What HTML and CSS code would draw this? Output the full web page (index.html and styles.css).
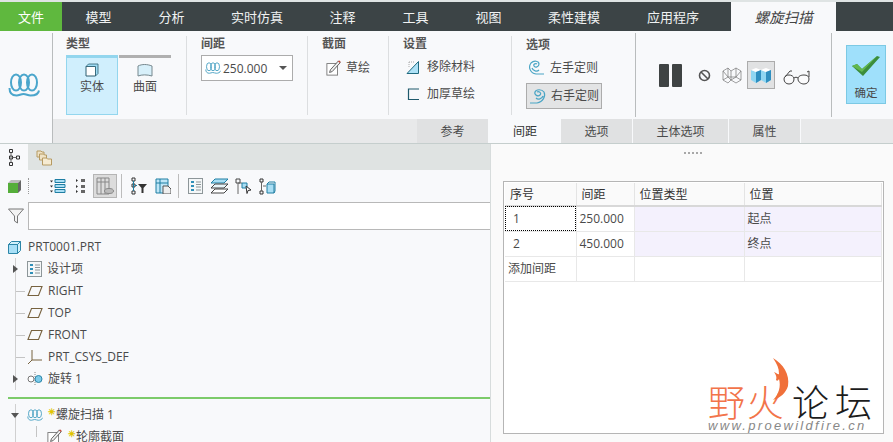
FILE: index.html
```html
<!DOCTYPE html>
<html lang="zh">
<head>
<meta charset="utf-8">
<title>螺旋扫描</title>
<link rel="stylesheet" href="styles.css">
</head>
<body>
<svg class="defs" width="0" height="0">
  <symbol id="helix" viewBox="0 0 32 24">
    <g fill="none" stroke="currentColor" stroke-width="2">
      <ellipse cx="8" cy="9.500" rx="5" ry="8"/>
      <ellipse cx="16" cy="9.500" rx="5" ry="8"/>
      <ellipse cx="24" cy="9.500" rx="5" ry="8"/>
      <path d="M1.500 15c0 5 3 7.500 7 7.500 3 0 4-1.500 7-1.500s4 1.500 7 1.500c4 0 8-1.500 8.500-5"/>
    </g>
  </symbol>
  <symbol id="plane" viewBox="0 0 16 12">
    <path d="M4.500 1.500H15L11.500 10.500H1z" fill="none" stroke="#77623f" stroke-width="1.100"/>
  </symbol>
  <symbol id="listdoc" viewBox="0 0 15 16">
    <rect x=".5" y=".5" width="14" height="15" fill="#f4f7f8" stroke="#8d9699"/>
    <path d="M3 3h3v2H3zM3 7h3v2H3zM3 11h3v2H3z" fill="#2f8fb8"/>
    <path d="M8 4h5M8 6.500h5M8 9h5M8 12h5" stroke="#8d9699"/>
  </symbol>
  <symbol id="pencil" viewBox="0 0 18 18">
    <rect x="1" y="4" width="12" height="13" fill="#fff" stroke="#777"/>
    <path d="M4 14l1-3 9-10 2 2-9 10z" fill="#eee" stroke="#555"/>
    <path d="M13.500 1.500l2 2 1-1.500-1.500-1.500z" fill="#c8483a"/>
  </symbol>
</svg>
<div class="app">
  <nav class="tabs">
    <span class="tab file">文件</span>
    <span class="tab">模型</span>
    <span class="tab">分析</span>
    <span class="tab">实时仿真</span>
    <span class="tab">注释</span>
    <span class="tab">工具</span>
    <span class="tab">视图</span>
    <span class="tab">柔性建模</span>
    <span class="tab app-tab">应用程序</span>
    <span class="tab active">螺旋扫描</span>
  </nav>

  <section class="ribbon">
    <div class="feature-icon">
      <svg class="helix-big"><use href="#helix"/></svg>
    </div>
    <div class="ribbon-main">
      <div class="groups">
        <div class="group g-type">
          <h4>类型</h4>
          <div class="type-btns">
            <div class="type-btn on">
              <svg width="14" height="14" viewBox="0 0 14 14"><path d="M1 3.500h9.500v9.500H1z" fill="#fff" stroke="#2f5f70"/><path d="M1 3.500l2.500-2.500H13v9.500L10.500 13V3.500z" fill="#9fdcf5" stroke="#2f5f70" stroke-width=".8"/></svg>
              <span>实体</span>
            </div>
            <div class="type-btn">
              <svg width="16" height="14" viewBox="0 0 16 14"><path d="M1 3c4-2 9-2 14 0v10c-5-1.500-10-1.500-14 0z" fill="#d8f0fa" stroke="#77888e"/></svg>
              <span>曲面</span>
            </div>
          </div>
        </div>
        <div class="group g-pitch">
          <h4>间距</h4>
          <div class="combo">
            <svg class="helix-small"><use href="#helix"/></svg>
            <span class="combo-val">250.000</span>
            <i class="caret"></i>
          </div>
        </div>
        <div class="group g-sect">
          <h4>截面</h4>
          <div class="cmd cmd-sketch"><svg width="16" height="16"><use href="#pencil"/></svg><span>草绘</span></div>
        </div>
        <div class="group g-set">
          <h4>设置</h4>
          <div class="cmd">
            <svg width="16" height="16" viewBox="0 0 16 16"><path d="M1 14.500L12.500 2.500V14.500z" fill="#aee2f7" stroke="#1f6a80"/><path d="M3 3h5M3 3v6" stroke="#aaa" stroke-dasharray="1 1"/></svg>
            <span>移除材料</span>
          </div>
          <div class="cmd">
            <svg width="16" height="16" viewBox="0 0 16 16"><path d="M13 3H2.500v10.500H13" fill="none" stroke="#1f5a6c" stroke-width="1.200"/></svg>
            <span>加厚草绘</span>
          </div>
        </div>
        <div class="group g-opt">
          <h4>选项</h4>
          <div class="cmd hand">
            <svg width="18" height="18" viewBox="0 0 18 18"><path d="M16 15H8C2 14 0 8 3 4c3-3 8-2 8 1s-4 4-5 2 2-3 3-2M4 9c1 3 5 4 7 2" fill="none" stroke="#4aa5c5" stroke-width="1.200"/></svg>
            <span>左手定则</span>
          </div>
          <div class="cmd hand pressed">
            <svg width="18" height="18" viewBox="0 0 18 18"><path d="M1 16h7c6-1 9-7 7-11-2-3-8-3-9 0s3 5 5 3-1-4-3-3M14 9c-1 3-5 4-7 2" fill="none" stroke="#4aa5c5" stroke-width="1.200"/></svg>
            <span>右手定则</span>
          </div>
        </div>
        <div class="group g-ctrl">
          <div class="pause"><i></i><i></i></div>
          <svg class="noentry" width="13" height="13" viewBox="0 0 13 13"><circle cx="6.500" cy="6.500" r="5" fill="none" stroke="#555" stroke-width="1.600"/><path d="M3 3l7 7" stroke="#555" stroke-width="1.600"/></svg>
          <svg class="wire" width="20" height="18" viewBox="0 0 20 18"><path d="M1 5l5-3 3 3 5-3 5 3v9l-5 3-5-3-3 3-5-3zM6 2v9l-5-6M6 11l3 3V5M14 2v9l5-6M14 11l-5 3M1 14l5-3 8 0 5 3" fill="none" stroke="#777" stroke-width=".7"/></svg>
          <div class="shade">
            <svg width="20" height="16" viewBox="0 0 20 16"><path d="M0 3l5 2 5-2v10l-5 3-5-3z" fill="#8fd6f2"/><path d="M0 3l5-2 5 2-5 2z" fill="#fff"/><path d="M5 5v11l5-3V3z" fill="#2f8fc0"/><path d="M10 3l5 2 5-2v10l-5 3-5-3z" fill="#8fd6f2"/><path d="M10 3l5-2 5 2-5 2z" fill="#fff"/><path d="M15 5v11l5-3V3z" fill="#2f8fc0"/></svg>
          </div>
          <svg class="glasses" width="28" height="16" viewBox="0 0 28 16"><path d="M1 10c0-3 3-4 5-4s5 1 5 4-2 5-5 5-5-2-5-5zM15 10c0-3 3-4 6-4s5 1 5 4-2 5-5 5-6-2-6-5zM11 9c1-1 3-1 4 0M2 8L7 2h2M26 8V2l-2 1" fill="#fff" fill-opacity=".4" stroke="#444" stroke-width="1"/></svg>
        </div>
        <div class="group g-ok">
          <div class="ok">
            <svg width="30" height="22" viewBox="0 0 30 22"><path d="M1 11l5-2 5 5L26 1l3 1-17 19z" fill="#3b8d3b"/><path d="M1 11l5-2 5 5L26 1l-15 16z" fill="#62b84e"/></svg>
            <span>确定</span>
          </div>
        </div>
      </div>
      <div class="subtabs">
        <span class="subtab">参考</span>
        <span class="subtab active">间距</span>
        <span class="subtab">选项</span>
        <span class="subtab wide">主体选项</span>
        <span class="subtab">属性</span>
      </div>
    </div>
  </section>

  <main class="panes">
    <section class="left">
      <div class="left-tabs">
        <span class="ltab active">
          <svg width="13" height="19" viewBox="0 0 13 19"><path d="M1.500 1.500h3v3h-3zM1.500 8h3v3h-3zM1.500 14.500h3v3h-3zM8.500 8h3v3h-3z" fill="none" stroke="#333"/><path d="M3 4.500V14.500M4.500 9.500h4" stroke="#666"/></svg>
        </span>
        <span class="ltab">
          <svg width="17" height="17" viewBox="0 0 17 17"><path d="M1 2h4l1 1h2v5H1z" fill="#efe2c5" stroke="#b69a62"/><path d="M3.500 5h4l1 1h2v5h-7z" fill="#efe2c5" stroke="#b69a62"/><path d="M6.500 9h4l1 1h4v6h-9z" fill="#f6ebd2" stroke="#b69a62"/></svg>
        </span>
      </div>
      <div class="toolbar">
        <svg width="14" height="14" viewBox="0 0 14 14"><path d="M0 4h10v10H0z" fill="#55ae3a"/><path d="M0 4l3-3h10l-3 3z" fill="#bbb"/><path d="M10 4l3-3v10l-3 3z" fill="#666"/></svg>
        <span class="dots"></span>
        <svg width="16" height="16" viewBox="0 0 16 16"><path d="M5 1.500h10v3H5zM5 6.500h10v3H5zM5 11.500h10v3H5z" fill="#a9def4" stroke="#1f7ea3"/><path d="M0 2.500h3L1.500 4.500zM0 7.500h3L1.500 9.500zM0 12.500h3L1.500 14.500z" fill="#333"/></svg>
        <svg width="10" height="16" viewBox="0 0 10 16"><path d="M0 1l2 1.500L0 4zM0 7l2 1.500L0 10zM0 12l2 1.500L0 15z" fill="#333"/><path d="M5 1h4v3H5zM5 7h4v3H5zM5 12h4v3H5z" fill="#666"/></svg>
        <span class="t-pressed">
          <svg width="18" height="18" viewBox="0 0 18 18"><path d="M1 1h12v16H1zM1 5h12M5 1v16M9 1v16" fill="none" stroke="#888"/><ellipse cx="13" cy="14" rx="4.500" ry="2.500" fill="#bbb" stroke="#888"/></svg>
        </span>
        <i class="sep"></i>
        <svg width="16" height="18" viewBox="0 0 16 18"><path d="M1 1h3v3H1zM1 7h3v3H1zM1 14h3v3H1z" fill="none" stroke="#333"/><path d="M2.500 4v10M4 8.500h2" stroke="#1f7ea3"/><path d="M7 7h9l-3.500 4v5h-2v-5z" fill="#333"/></svg>
        <svg width="16" height="16" viewBox="0 0 16 16"><path d="M1 1h12v14H1zM1 5h12M5 1v14" fill="#bfe6f7" stroke="#1f7ea3"/><path d="M8 8h5l3 3v5H8z" fill="#eee" stroke="#555"/></svg>
        <i class="sep"></i>
        <svg width="15" height="16"><use href="#listdoc"/></svg>
        <svg width="18" height="16" viewBox="0 0 18 16"><path d="M4 1h13l-4 4H0z" fill="#a9def4" stroke="#1f7ea3"/><path d="M4 6h13l-4 4H0z" fill="#e8f5fa" stroke="#444"/><path d="M4 11h13l-4 4H0z" fill="#fff" stroke="#444"/></svg>
        <svg width="17" height="17" viewBox="0 0 17 17"><path d="M1 1h4v4H1z" fill="none" stroke="#444"/><path d="M3 5v11M3 5h4" stroke="#666"/><path d="M7 5h5v5H7z" fill="#a9def4" stroke="#1f7ea3"/><path d="M11 8l5 4-3 .5-1 3z" fill="#fff" stroke="#333"/></svg>
        <svg width="17" height="17" viewBox="0 0 17 17"><path d="M1 1h3v3H1zM1 13h3v3H1z" fill="none" stroke="#333"/><path d="M2.500 4v9M4 8h3" stroke="#666"/><path d="M8 6h7v9H8z" fill="#a9def4" stroke="#1f7ea3"/><path d="M8 6l2-2h6v9l-1 2" fill="none" stroke="#1f7ea3"/></svg>
      </div>
      <div class="filter">
        <svg width="16" height="16" viewBox="0 0 16 16"><path d="M.5 1h15L9.500 8v7l-3-2V8z" fill="#f3f3f3" stroke="#777"/></svg>
        <span class="filter-input"></span>
      </div>
      <ul class="tree">
        <li class="root">
          <svg width="13" height="13" viewBox="0 0 13 13"><path d="M.5 3.500h9v9h-9z" fill="#a9e0f7" stroke="#2c86a8"/><path d="M.5 3.500l3-3h9l-3 3zM9.500 3.500l3-3v9l-3 3z" fill="#d3f1fb" stroke="#2c86a8"/></svg>
          <span>PRT0001.PRT</span>
        </li>
        <li class="node"><i class="exp"></i><svg class="ico" width="15" height="16"><use href="#listdoc"/></svg><span>设计项</span></li>
        <li class="node branch"><svg class="ico" width="16" height="12"><use href="#plane"/></svg><span>RIGHT</span></li>
        <li class="node branch"><svg class="ico" width="16" height="12"><use href="#plane"/></svg><span>TOP</span></li>
        <li class="node branch"><svg class="ico" width="16" height="12"><use href="#plane"/></svg><span>FRONT</span></li>
        <li class="node branch"><svg class="ico" width="16" height="16" viewBox="0 0 16 16"><path d="M5 1v10h10M5 11l-4 4" fill="none" stroke="#77623f"/></svg><span>PRT_CSYS_DEF</span></li>
        <li class="node"><i class="exp"></i><svg class="ico" width="16" height="14" viewBox="0 0 16 14"><path d="M8 0v14" stroke="#888" stroke-dasharray="1 1"/><circle cx="4" cy="7" r="3" fill="#fff" stroke="#777"/><circle cx="11.500" cy="7" r="3.500" fill="#7ccbea" stroke="#2c86a8"/></svg><span>旋转 1</span></li>
        <li class="insert"></li>
        <li class="node"><i class="exp open"></i><svg class="ico ico-helix" width="16" height="12"><use href="#helix"/></svg><b class="star">✳</b><span>螺旋扫描 1</span></li>
        <li class="node sub"><svg class="ico" width="16" height="16"><use href="#pencil"/></svg><b class="star">✳</b><span>轮廓截面</span></li>
      </ul>
    </section>

    <section class="right">
      <div class="grip"><i></i></div>
      <div class="table-box">
        <table>
          <thead>
            <tr><th class="c1">序号</th><th class="c2">间距</th><th class="c3">位置类型</th><th class="c4">位置</th></tr>
          </thead>
          <tbody>
            <tr><td class="num focus">1</td><td class="val">250.000</td><td class="tint"></td><td class="tint">起点</td></tr>
            <tr><td class="num">2</td><td class="val">450.000</td><td class="tint"></td><td class="tint">终点</td></tr>
            <tr><td class="add">添加间距</td><td></td><td></td><td></td></tr>
          </tbody>
        </table>
      </div>
      <div class="watermark">
        <div class="wm-main">
          <span class="wm-red">野</span>
          <span class="wm-red wm-fire">火
            <svg class="flame" width="18" height="42" viewBox="0 0 18 42"><path d="M1 0c10 6 17 16 15 28C14 35 8 40 1 42c6-6 8-14 6-21-1 2-2 2-3 1 1-3 0-5-2-8 3 1 4 3 5 2C7 10 5 6 1 0z" fill="#f0703a"/></svg>
          </span>
          <span class="wm-dark">论坛</span>
        </div>
        <div class="wm-url">www.proewildfire.cn</div>
      </div>
    </section>
  </main>
</div>
</body>
</html>
```

FILE: styles.css
```css
* { box-sizing: border-box; }
html, body { margin: 0; padding: 0; }
body {
  width: 893px; height: 442px; overflow: hidden;
  font-family: "Open Sans", "Noto Sans CJK SC", sans-serif;
  font-size: 12px; color: #4a4a4a; background: #f8f9fb;
}
.defs { position: absolute; }
.app { display: flex; flex-direction: column; height: 442px; background: #dfe4e4; padding-top: 2px; }

/* top tabs */
.tabs { display: flex; height: 29px; background: #3c4446; flex: none; }
.tab { display: flex; align-items: center; justify-content: center; width: 73px; color: #f0f2f2; font-size: 13px; }
.tab:nth-child(4), .tab:nth-child(8) { width: 98px; }
.tab.file { width: 62px; background: #5fb83e; color: #fff; }
.tab.app-tab { width: 108px; padding-right: 8px; }
.tab.active { width: 105px; background: #f8f9fb; color: #444; font-style: italic; font-size: 14.500px; }

/* ribbon */
.ribbon { display: flex; height: 113px; flex: none; background: #f8f9fb; border-bottom: 1px solid #c5cecd; }
.feature-icon { width: 53px; height: 110px; margin-top: 2px; border-right: 1px solid #b9bcbd; display: flex; align-items: center; justify-content: center; padding-bottom: 6px; padding-right: 5px; }
.helix-big { width: 32px; height: 24px; color: #4ba6cc; }
.ribbon-main { flex: 1; display: flex; flex-direction: column; min-width: 0; }
.groups { display: flex; height: 88px; flex: none; }
.group { padding: 1px 0 0 14px; margin-top: 5px; height: 79px; border-right: 1px solid #dcdee0; flex: none; position: relative; }
.group h4 { margin: 0; font-size: 12px; font-weight: 700; line-height: 14px; color: #555; }
.g-type { width: 134px; padding-left: 13px; }
.g-pitch { width: 121px; }
.g-sect { width: 81px; }
.g-set { width: 123px; }
.g-opt { width: 124px; border-right-color: #b9bcbd; height: 84px; margin-top: 2px; padding-top: 5px; }
.g-ctrl { width: 196px; border-right: 1px solid #b9bcbd; height: 84px; margin-top: 2px; padding: 0 0 0 23px; display: flex; align-items: center; }
.g-ok { border: 0; padding: 0 0 0 14px; margin-top: 14px; }

.type-btns { display: flex; gap: 1px; margin-top: 4px; }
.type-btn { width: 52px; height: 60px; border-top: 3px solid #b0b0b0; display: flex; flex-direction: column; align-items: center; gap: 2px; padding-top: 5px; line-height: 16px; }
.type-btn.on { background: #d0effd; border: 1px solid #93d6ee; border-top: 3px solid #93d6ee; }

.combo { display: flex; align-items: center; width: 92px; height: 26px; margin-top: 4px; border: 1px solid #acacac; background: #fff; padding-left: 3px; gap: 2px; }
.helix-small { width: 16px; height: 12px; color: #58a9c8; flex: none; }
.combo-val { font-size: 12px; flex: 1; }
.caret { width: 0; height: 0; border: 4px solid transparent; border-top: 4px solid #555; border-bottom: 0; margin-right: 5px; }

.cmd { display: flex; align-items: center; gap: 5px; height: 27px; line-height: 16px; padding-left: 2px; white-space: nowrap; }
.g-set .cmd { margin-left: 1px; }
.g-set h4 + .cmd { margin-top: 2px; }
.cmd-sketch { margin-top: 3px; padding-left: 4px; gap: 4px; }
.hand { width: 76px; height: 26px; gap: 4px; padding-left: 2px; margin-top: 2px; }
.g-opt h4 + .hand { margin-top: 3px; }
.hand.pressed { background: #e3e4e5; border: 1px solid #acacac; padding-left: 2px; margin-top: 2px; }

.pause { display: flex; gap: 3px; }
.pause i { width: 10px; height: 23px; background: #3f4343; border-radius: 1px; display: block; }
.noentry { margin-left: 16px; }
.wire { margin-left: 11px; }
.shade { width: 28px; height: 28px; margin-left: 5px; background: #e1e2e3; border: 1px solid #acacac; display: flex; align-items: center; justify-content: center; }
.glasses { margin-left: 8px; margin-top: 4px; }

.ok { width: 40px; height: 59px; background: #9fe0fb; border: 1px solid #7cc9e4; display: flex; flex-direction: column; align-items: center; padding-top: 9px; gap: 8px; line-height: 16px; font-size: 11.500px; }

.subtabs { display: flex; height: 24px; padding-left: 364px; background: #e8e9ea; flex: none; }
.subtab { width: 72px; display: flex; align-items: center; justify-content: center; background: #e0e1e2; border-right: 1px solid #f8f9fb; font-size: 12px; }
.subtab.wide { width: 96px; }
.subtab.active { background: #f8f9fb; color: #333; border: 0; }

/* panes */
.panes { flex: 1; display: flex; min-height: 0; background: #f8f9fb; }
.left { width: 490px; flex: none; display: flex; flex-direction: column; background: #f8f9fb; overflow: hidden; }
.left-tabs { display: flex; height: 26px; background: #dfe3e2; flex: none; }
.ltab { width: 28px; display: flex; align-items: center; justify-content: center; }
.ltab.active { background: #f8f9fb; }
.ltab + .ltab { width: 30px; padding-left: 2px; }

.toolbar { display: flex; align-items: center; height: 32px; padding-left: 8px; flex: none; }
.toolbar > :nth-child(2) { margin-left: 6px; }
.toolbar > :nth-child(3) { margin-left: 20px; }
.toolbar > :nth-child(4) { margin-left: 10px; }
.toolbar > :nth-child(5) { margin-left: 7px; }
.toolbar > :nth-child(6) { margin-left: 4px; }
.toolbar > :nth-child(7) { margin-left: 9px; }
.toolbar > :nth-child(8) { margin-left: 8px; }
.toolbar > :nth-child(9) { margin-left: 7px; }
.toolbar > :nth-child(10) { margin-left: 9px; }
.toolbar > :nth-child(11) { margin-left: 8px; }
.toolbar > :nth-child(12) { margin-left: 6px; }
.toolbar > :nth-child(13) { margin-left: 7px; }
.dots { width: 2px; height: 16px; border-left: 1px dotted #999; }
.t-pressed { width: 24px; height: 24px; background: #dcdcdc; border: 1px solid #b5b5b5; display: flex; align-items: center; justify-content: center; }
.sep { width: 1px; height: 24px; background: #bcbcbc; }
.filter { display: flex; align-items: center; height: 28px; padding-left: 8px; gap: 4px; flex: none; }
.filter-input { flex: 1; height: 28px; background: #fff; border: 1px solid #b8b8b8; border-right: 0; }

.tree { list-style: none; margin: 6px 0 0; padding: 0; }
.tree li { display: flex; align-items: center; height: 22px; line-height: 22px; white-space: nowrap; position: relative; }
.tree .root { padding-left: 8px; gap: 7px; }
.node { padding-left: 27px; }
.node .ico { margin-right: 5px; flex: none; }
.node.branch::before { content: ""; position: absolute; left: 15px; top: 11px; width: 10px; height: 1px; background: #c4c4c4; }
.tree li.node::after { content: ""; position: absolute; left: 15px; top: 0; bottom: 0; width: 1px; background: #d0d0d0; z-index: 0; }
.exp { position: absolute; left: 13px; top: 7px; width: 0; height: 0; border: 4px solid transparent; border-left: 5px solid #555; border-right: 0; z-index: 1; }
.exp.open { left: 11px; top: 9px; border: 4px solid transparent; border-top: 5px solid #555; border-bottom: 0; }
.tree li.insert { height: 14px; align-items: flex-start; padding-top: 7px; }
.tree li.insert::after { content: ""; flex: 1; height: 2px; background: #7ccb6a; margin-left: 8px; }
.ico-helix { color: #58a9c8; }
.star { color: #e0c400; font-size: 9px; font-weight: 700; line-height: 10px; align-self: flex-start; margin-top: 3px; }
.node.sub { padding-left: 47px; }
.node.sub::before { content: ""; position: absolute; left: 36px; top: 0; width: 1px; height: 11px; background: #c4c4c4; }

/* right */
.right { flex: 1; position: relative; border-left: 1px solid #d7dcdc; background: #fafafa; padding: 0 9px 0 12px; overflow: hidden; }
.grip { height: 37px; display: flex; justify-content: center; padding: 8px 2px 0 0; }
.grip i { width: 18px; height: 2px; border-top: 2px dotted #a8a8a8; }
.table-box { height: 253px; border: 1px solid #b5b5b5; background: #fff; padding: 1px 2px 0 1px; }
table { border-collapse: collapse; table-layout: fixed; width: 376px; }
th { height: 23px; background: #fafafa; font-weight: 400; text-align: left; color: #333; padding: 0 0 0 5px; border-right: 1px solid #e4e4e4; border-bottom: 2px solid #d8d8d8; }
.c1 { width: 71px; }
.c2 { width: 58px; }
.c3 { width: 110px; }
.c4 { width: 137px; }
td { height: 25px; padding: 0 0 0 3px; border-right: 1px solid #e8e8e8; border-bottom: 1px solid #e8e8e8; line-height: 16px; }
.num { padding-left: 8px; }
.val { padding-left: 3px; }
.focus { outline: 1px dotted #000; outline-offset: -1px; }
.tint { background: #f4f1fd; }
.add { padding-left: 3px; }

/* watermark */
.watermark { position: absolute; left: 217px; top: 239px; width: 170px; }
.wm-main { display: flex; align-items: flex-end; height: 36px; font-size: 37px; line-height: 36px; font-family: "Noto Sans CJK SC", sans-serif; font-weight: 300; }
.wm-red { color: #f2744a; width: 40px; }
.wm-fire { position: relative; width: 47px; }
.flame { position: absolute; left: 25px; top: -25px; }
.wm-dark { color: #1c1c1c; letter-spacing: 6px; white-space: nowrap; }
.wm-url { font-family: "Liberation Sans", sans-serif; font-style: italic; font-size: 13px; letter-spacing: 2.300px; color: #888; line-height: 14px; white-space: nowrap; }
```
